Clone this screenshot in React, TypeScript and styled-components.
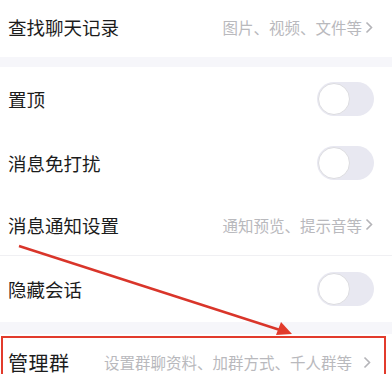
import React from "react";
import styled, {createGlobalStyle} from "styled-components";

const GlobalStyle = createGlobalStyle`
  html, body {
    margin: 0;
    padding: 0;
    background: #ffffff;
  }

  body {
    font-family: "Noto Sans CJK SC", "Noto Sans", sans-serif;
    overflow: hidden;
  }
`;

const Page = styled.div`
  position: relative;
  width: 392px;
  height: 374px;
  overflow: hidden;
  background: #ffffff;
`;

const Group = styled.div`
  display: flex;
  flex-direction: column;
  background: #ffffff;
`;

const Gap = styled.div<{ $h: number }>`
  height: ${p => p.$h}px;
  background: #f6f6fa;
`;

const Row = styled.div<{ $h: number; $divider?: boolean }>`
  position: relative;
  display: flex;
  align-items: center;
  justify-content: space-between;
  height: ${p => p.$h}px;
  padding: 0 18px 0 8px;
  box-sizing: border-box;
  border-bottom: ${p => (p.$divider ? "1px solid #f0f0f3" : "none")};
`;

const Label = styled.span<{ $big?: boolean }>`
  font-size: ${p => (p.$big ? "20px" : "18.5px")};
  color: #1c1c1c;
  letter-spacing: ${p => (p.$big ? "0.5px" : "0")};
`;

const Hint = styled.span<{ $wide?: boolean }>`
  display: flex;
  align-items: center;
  gap: ${p => (p.$wide ? "11px" : "3px")};
  font-size: 15.5px;
  color: #b9b9bd;
  margin-right: ${p => (p.$wide ? "3px" : "1px")};
`;

const Toggle = styled.div`
  position: relative;
  width: 57px;
  height: 34px;
  border-radius: 17px;
  background: #e8e8f1;
`;

const Knob = styled.div`
  position: absolute;
  left: 1px;
  top: 1px;
  width: 32px;
  height: 32px;
  border-radius: 50%;
  background: #ffffff;
  box-sizing: border-box;
  border: 1.5px solid #dcdce0;
`;

const Highlight = styled.div`
  position: absolute;
  left: 1px;
  right: 6px;
  top: 2px;
  bottom: -6px;
  border: 2px solid #e23b2c;
  pointer-events: none;
`;

const Overlay = styled.svg`
  position: absolute;
  left: 0;
  top: 0;
  pointer-events: none;
`;

function Chevron() {
	return (
		<svg width="8" height="13" viewBox="0 0 8 13">
			<path d="M1.5 1.5 L6.5 6.5 L1.5 11.5" fill="none" stroke="#b4b4b8" strokeWidth="1.6" />
		</svg>
	);
}

function Switch() {
	return (
		<Toggle>
			<Knob />
		</Toggle>
	);
}

export default function App() {
	return (
		<Page>
			<GlobalStyle />
			<Group>
				<Row $h={57} style={{paddingBottom: 3}}>
					<Label>查找聊天记录</Label>
					<Hint>图片、视频、文件等<Chevron /></Hint>
				</Row>
			</Group>
			<Gap $h={10} />
			<Group>
				<Row $h={64}>
					<Label>置顶</Label>
					<Switch />
				</Row>
				<Row $h={63}>
					<Label>消息免打扰</Label>
					<Switch />
				</Row>
				<Row $h={62} $divider>
					<Label>消息通知设置</Label>
					<Hint>通知预览、提示音等<Chevron /></Hint>
				</Row>
				<Row $h={66}>
					<Label>隐藏会话</Label>
					<Switch />
				</Row>
			</Group>
			<Gap $h={12} />
			<Group>
				<Row $h={56}>
					<Label $big>管理群</Label>
					<Hint $wide>设置群聊资料、加群方式、千人群等<Chevron /></Hint>
					<Highlight />
				</Row>
			</Group>
			<Overlay width="392" height="374" viewBox="0 0 392 374">
				<line x1="19" y1="246" x2="280" y2="330" stroke="#d9352a" strokeWidth="2.4" />
				<polygon points="292,334 276,335 281,322" fill="#e23b2c" />
			</Overlay>
		</Page>
	);
}
